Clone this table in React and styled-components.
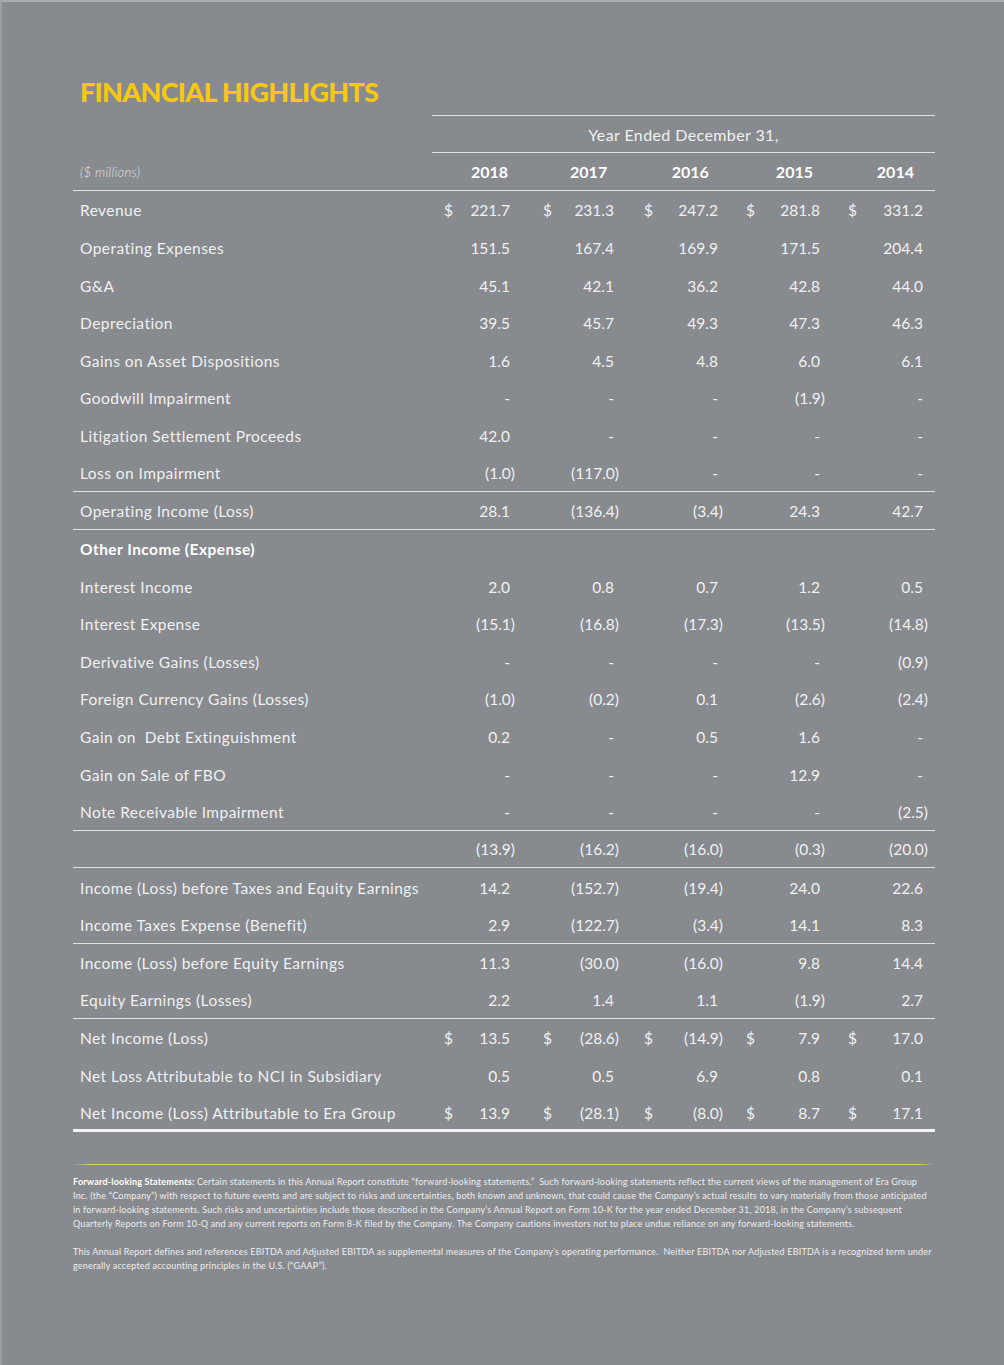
import React from 'react';
import styled, { createGlobalStyle } from 'styled-components';

const COLS = '359px repeat(5, 100.6px)';
const DOLLAR_LEFT = [12, 10.4, 10.8, 12.2, 13.6];
const VALUE_RIGHT = [22.6, 19.2, 15.8, 14.4, 12];
const YEAR_RIGHT = [24.6, 26, 25, 21.4, 21];
const YEARS = ['2018', '2017', '2016', '2015', '2014'];

const ROWS = [
  { label: 'Revenue', dollar: true, values: ['221.7', '231.3', '247.2', '281.8', '331.2'] },
  { label: 'Operating Expenses', values: ['151.5', '167.4', '169.9', '171.5', '204.4'] },
  { label: 'G&A', values: ['45.1', '42.1', '36.2', '42.8', '44.0'] },
  { label: 'Depreciation', values: ['39.5', '45.7', '49.3', '47.3', '46.3'] },
  { label: 'Gains on Asset Dispositions', values: ['1.6', '4.5', '4.8', '6.0', '6.1'] },
  { label: 'Goodwill Impairment', values: ['-', '-', '-', '(1.9)', '-'] },
  { label: 'Litigation Settlement Proceeds', values: ['42.0', '-', '-', '-', '-'] },
  { label: 'Loss on Impairment', line: true, values: ['(1.0)', '(117.0)', '-', '-', '-'] },
  { label: 'Operating Income (Loss)', line: true, values: ['28.1', '(136.4)', '(3.4)', '24.3', '42.7'] },
  { label: 'Other Income (Expense)', heading: true, values: [] },
  { label: 'Interest Income', values: ['2.0', '0.8', '0.7', '1.2', '0.5'] },
  { label: 'Interest Expense', values: ['(15.1)', '(16.8)', '(17.3)', '(13.5)', '(14.8)'] },
  { label: 'Derivative Gains (Losses)', values: ['-', '-', '-', '-', '(0.9)'] },
  { label: 'Foreign Currency Gains (Losses)', values: ['(1.0)', '(0.2)', '0.1', '(2.6)', '(2.4)'] },
  { label: 'Gain on\u00a0 Debt Extinguishment', values: ['0.2', '-', '0.5', '1.6', '-'] },
  { label: 'Gain on Sale of FBO', values: ['-', '-', '-', '12.9', '-'] },
  { label: 'Note Receivable Impairment', line: true, values: ['-', '-', '-', '-', '(2.5)'] },
  { label: '', line: true, values: ['(13.9)', '(16.2)', '(16.0)', '(0.3)', '(20.0)'] },
  { label: 'Income (Loss) before Taxes and Equity Earnings', values: ['14.2', '(152.7)', '(19.4)', '24.0', '22.6'] },
  { label: 'Income Taxes Expense (Benefit)', line: true, values: ['2.9', '(122.7)', '(3.4)', '14.1', '8.3'] },
  { label: 'Income (Loss) before Equity Earnings', values: ['11.3', '(30.0)', '(16.0)', '9.8', '14.4'] },
  { label: 'Equity Earnings (Losses)', line: true, values: ['2.2', '1.4', '1.1', '(1.9)', '2.7'] },
  { label: 'Net Income (Loss)', dollar: true, values: ['13.5', '(28.6)', '(14.9)', '7.9', '17.0'] },
  { label: 'Net Loss Attributable to NCI in Subsidiary', values: ['0.5', '0.5', '6.9', '0.8', '0.1'] },
  { label: 'Net Income (Loss) Attributable to Era Group', dollar: true, thick: true, values: ['13.9', '(28.1)', '(8.0)', '8.7', '17.1'] },
];

const GlobalStyle = createGlobalStyle`
  body {
    margin: 0;
    background: #878a8e;
  }

  * {
    box-sizing: border-box;
  }
`;

const Page = styled.div`
  width: 1004px;
  min-height: 1365px;
  background: #878a8e;
  border-top: 2px solid #a8aaad;
  border-left: 2px solid #9d9fa3;
  padding: 74px 0 0 71px;
  font-family: Lato, 'Liberation Sans', sans-serif;
  color: #f1f1f1;
`;

const Sheet = styled.div`
  width: 862px;
`;

const Title = styled.h1`
  margin: 0 0 7px;
  padding-left: 7px;
  font-size: 27px;
  line-height: 32px;
  font-weight: 900;
  color: #f7c716;
  letter-spacing: -0.7px;
`;

const HeadRow = styled.div`
  display: grid;
  grid-template-columns: ${COLS};
  height: 38px;
  align-items: center;
  border-bottom: ${(p) => (p.$line ? '1px solid #e2e3e4' : 'none')};
`;

const YearSpan = styled.div`
  grid-column: 2 / 7;
  height: 38px;
  border-top: 1px solid #e2e3e4;
  border-bottom: 1px solid #e2e3e4;
  display: flex;
  align-items: center;
  justify-content: center;
  font-size: 16px;
  font-weight: 400;
  letter-spacing: 0.4px;
`;

const Units = styled.div`
  padding-left: 7px;
  font-size: 13px;
  font-style: italic;
  font-weight: 300;
  color: #e4e4e4;
  letter-spacing: 0.3px;
`;

const Year = styled.div`
  text-align: right;
  padding-right: ${(p) => p.$pad}px;
  font-size: 16px;
  font-weight: 700;
  color: #ffffff;
`;

const Row = styled.div`
  display: grid;
  grid-template-columns: ${COLS};
  height: 37.625px;
  align-items: center;
  padding-top: ${(p) => (p.$thick ? 3 : 1)}px;
  border-bottom: ${(p) =>
    p.$thick ? '3px solid #f4f4f4' : p.$line ? '1px solid #e2e3e4' : 'none'};
`;

const Label = styled.div`
  padding-left: 7px;
  font-size: 15.5px;
  letter-spacing: 0.45px;
  font-weight: ${(p) => (p.$heading ? 700 : 400)};
  color: ${(p) => (p.$heading ? '#ffffff' : '#f1f1f1')};
  white-space: nowrap;
`;

const Cell = styled.div`
  display: flex;
  justify-content: space-between;
  padding-left: ${(p) => p.$left}px;
  padding-right: ${(p) => p.$right}px;
  font-size: 15.5px;
  white-space: nowrap;
`;

const Paren = styled.span`
  margin-right: -5px;
`;

const Rule = styled.div`
  height: 1px;
  margin-top: 32.375px;
  background: linear-gradient(
    to right,
    rgba(214, 209, 96, 0),
    #d6d160 2%,
    #d6d160 98%,
    rgba(214, 209, 96, 0)
  );
`;

const Note = styled.p`
  margin: ${(p) => (p.$first ? '10px' : '14px')} 0 0;
  font-size: 9px;
  letter-spacing: 0.2px;
  line-height: 14px;
  color: #eeeeee;
  white-space: nowrap;

  b {
    font-weight: 700;
    color: #ffffff;
  }
`;

function Value({ text }) {
  if (text.startsWith('(')) {
    return (
      <span>
        {text.slice(0, -1)}
        <Paren>)</Paren>
      </span>
    );
  }
  return <span>{text}</span>;
}

export default function App() {
  return (
    <Page>
      <GlobalStyle />
      <Sheet>
        <Title>FINANCIAL HIGHLIGHTS</Title>

        <HeadRow>
          <div />
          <YearSpan>Year Ended December 31,</YearSpan>
        </HeadRow>
        <HeadRow $line>
          <Units>($ millions)</Units>
          {YEARS.map((y, i) => (
            <Year key={y} $pad={YEAR_RIGHT[i]}>
              {y}
            </Year>
          ))}
        </HeadRow>

        {ROWS.map((row, r) => (
          <Row key={r} $line={row.line} $thick={row.thick}>
            <Label $heading={row.heading}>{row.label}</Label>
            {row.values.map((v, i) => (
              <Cell key={i} $left={DOLLAR_LEFT[i]} $right={VALUE_RIGHT[i]}>
                <span>{row.dollar ? '$' : ''}</span>
                <Value text={v} />
              </Cell>
            ))}
          </Row>
        ))}

        <Rule />
        <Note $first>
          <b>Forward-looking Statements:</b> Certain statements in this Annual Report constitute
          “forward-looking statements.”&nbsp; Such forward-looking statements reflect the current
          views of the management of Era Group
          <br />
          Inc. (the “Company”) with respect to future events and are subject to risks and
          uncertainties, both known and unknown, that could cause the Company’s actual results to
          vary materially from those anticipated
          <br />
          in forward-looking statements. Such risks and uncertainties include those described in
          the Company’s Annual Report on Form 10-K for the year ended December 31, 2018, in the
          Company’s subsequent
          <br />
          Quarterly Reports on Form 10-Q and any current reports on Form 8-K filed by the Company.
          The Company cautions investors not to place undue reliance on any forward-looking
          statements.
        </Note>
        <Note>
          This Annual Report defines and references EBITDA and Adjusted EBITDA as supplemental
          measures of the Company’s operating performance.&nbsp; Neither EBITDA nor Adjusted EBITDA
          is a recognized term under
          <br />
          generally accepted accounting principles in the U.S. (“GAAP”).
        </Note>
      </Sheet>
    </Page>
  );
}
